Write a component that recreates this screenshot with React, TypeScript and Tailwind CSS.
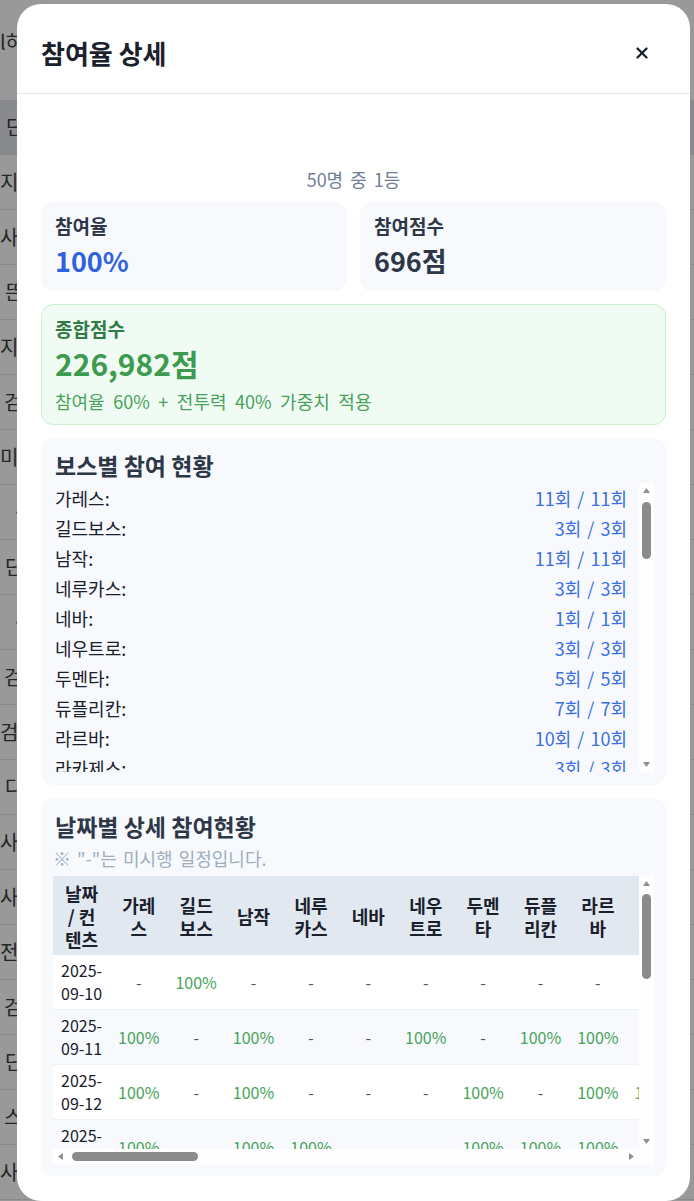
import { X } from "lucide-react";

type BossStat = {
  name: string;
  done: number;
  total: number;
};

const bossStats: BossStat[] = [
  { name: "가레스", done: 11, total: 11 },
  { name: "길드보스", done: 3, total: 3 },
  { name: "남작", done: 11, total: 11 },
  { name: "네루카스", done: 3, total: 3 },
  { name: "네바", done: 1, total: 1 },
  { name: "네우트로", done: 3, total: 3 },
  { name: "두멘타", done: 5, total: 5 },
  { name: "듀플리칸", done: 7, total: 7 },
  { name: "라르바", done: 10, total: 10 },
  { name: "라카제스", done: 3, total: 3 },
  { name: "레비아탄", done: 2, total: 2 },
  { name: "로드마", done: 4, total: 4 },
  { name: "리치", done: 6, total: 6 },
  { name: "마야", done: 2, total: 2 },
  { name: "메두사", done: 8, total: 8 },
  { name: "바포메트", done: 5, total: 5 },
  { name: "발록", done: 1, total: 1 },
  { name: "베리스", done: 3, total: 3 },
  { name: "불칸", done: 4, total: 4 },
  { name: "사이클롭스", done: 6, total: 6 },
  { name: "산적두목", done: 9, total: 9 },
  { name: "세르칸", done: 2, total: 2 },
  { name: "셀로비아", done: 3, total: 3 },
  { name: "수르트", done: 1, total: 1 },
  { name: "스피드", done: 7, total: 7 },
  { name: "시에라", done: 4, total: 4 },
  { name: "아나키스", done: 2, total: 2 },
  { name: "아르보", done: 5, total: 5 },
  { name: "안타라스", done: 1, total: 1 },
  { name: "에이션트", done: 3, total: 3 },
  { name: "오르펜", done: 6, total: 6 },
  { name: "우로보로스", done: 2, total: 2 },
  { name: "이프리트", done: 8, total: 8 },
  { name: "자켄", done: 4, total: 4 },
  { name: "장군", done: 10, total: 10 },
  { name: "케르투브", done: 3, total: 3 },
  { name: "코루스", done: 5, total: 5 },
  { name: "크루마", done: 2, total: 2 },
  { name: "타르칸", done: 6, total: 6 },
  { name: "탈킨", done: 1, total: 1 },
  { name: "티미트리스", done: 4, total: 4 },
  { name: "파푸리온", done: 3, total: 3 },
  { name: "퀸앤트", done: 7, total: 7 },
  { name: "하피", done: 2, total: 2 },
];

// 1 = 100%, 0 = 미시행("-"), null = 빈칸
const visibleDays: { date: string; cells: (number | null)[] }[] = [
  { date: "2025-09-10", cells: [0, 1, 0, 0, 0, 0, 0, 0, 0, null] },
  { date: "2025-09-11", cells: [1, 0, 1, 0, 0, 1, 0, 1, 1, null] },
  { date: "2025-09-12", cells: [1, 0, 1, 0, 0, 0, 1, 0, 1, 1] },
  { date: "2025-09-13", cells: [1, 0, 1, 1, 0, 0, 1, 1, 1, 0] },
];

const moreDates = ["2025-09-14", "2025-09-15", "2025-09-16", "2025-09-17", "2025-09-18", "2025-09-19"];

const days = [
  ...visibleDays,
  ...moreDates.map((date, i) => ({
    date,
    cells: bossStats.map((_, j) => ((i + j) % 3 === 0 ? 1 : 0)),
  })),
];

const bgRows = [
  { text: "단", pad: "pl-[6px]", shade: true },
  { text: "지", pad: "pl-0", shade: false },
  { text: "사", pad: "pl-0", shade: false },
  { text: "뜬", pad: "pl-[5px]", shade: false },
  { text: "지", pad: "pl-0", shade: false },
  { text: "검", pad: "pl-[4px]", shade: false },
  { text: "미", pad: "pl-0", shade: false },
  { text: "·", pad: "pl-[12px]", shade: false },
  { text: "단", pad: "pl-[5px]", shade: false },
  { text: "·", pad: "pl-[12px]", shade: false },
  { text: "검", pad: "pl-[4px]", shade: false },
  { text: "검", pad: "pl-0", shade: false },
  { text: "다", pad: "pl-[5px]", shade: false },
  { text: "사", pad: "pl-0", shade: false },
  { text: "사", pad: "pl-0", shade: false },
  { text: "전", pad: "pl-0", shade: false },
  { text: "검", pad: "pl-[4px]", shade: false },
  { text: "단", pad: "pl-[5px]", shade: false },
  { text: "스", pad: "pl-[4px]", shade: false },
  { text: "사", pad: "pl-0", shade: false },
];

function Arrow({ dir }: { dir: "up" | "down" | "left" | "right" }) {
  const points = {
    up: "3.5,0 7,5 0,5",
    down: "0,0 7,0 3.5,5",
    left: "5,0 5,7 0,3.5",
    right: "0,0 5,3.5 0,7",
  }[dir];
  const vertical = dir === "up" || dir === "down";
  return (
    <svg width={vertical ? 7 : 5} height={vertical ? 5 : 7} viewBox={vertical ? "0 0 7 5" : "0 0 5 7"}>
      <polygon points={points} fill="#8f8f8f" />
    </svg>
  );
}

function VScroll({ thumbClass }: { thumbClass: string }) {
  return (
    <div className="flex w-[15px] shrink-0 flex-col items-center bg-[#fefefe]">
      <div className="flex h-[15px] items-center justify-center">
        <Arrow dir="up" />
      </div>
      <div className="flex flex-1 flex-col items-center">
        <div className={`w-[9px] rounded-full bg-[#8b8b8b] ${thumbClass}`} />
      </div>
      <div className="flex h-[15px] items-center justify-center">
        <Arrow dir="down" />
      </div>
    </div>
  );
}

function HScroll() {
  return (
    <div className="flex h-[15px] items-center bg-[#fefefe]">
      <div className="flex w-[15px] items-center justify-center">
        <Arrow dir="left" />
      </div>
      <div className="flex flex-1 items-center">
        <div className="ml-[4px] h-[9px] w-[126px] rounded-full bg-[#8b8b8b]" />
      </div>
      <div className="flex w-[15px] items-center justify-center">
        <Arrow dir="right" />
      </div>
    </div>
  );
}

function Cell({ value }: { value: number | null | undefined }) {
  if (value === null || value === undefined) return <td className="px-2 py-1" />;
  if (value === 1) return <td className="px-2 py-1 text-[#48a35a]">100%</td>;
  return <td className="px-2 py-1 text-[#4a5568]">-</td>;
}

export default function App() {
  return (
    <div className="relative h-[1201px] w-full overflow-hidden bg-white font-['Noto_Sans_CJK_KR',sans-serif] text-[#1a202c]">
      {/* page behind the overlay */}
      <div className="flex flex-col text-[20px] text-[#3c3c3c]">
        <div className="flex h-[100px] flex-col pt-[28px]">
          <span className="leading-[28px]">l하</span>
        </div>
        {bgRows.map((row, i) => (
          <div
            key={i}
            className={`flex h-[55px] items-center border-b border-gray-200 ${row.pad} ${row.shade ? "bg-gray-200" : ""}`}
          >
            {row.text}
          </div>
        ))}
      </div>

      <div className="absolute inset-0 bg-black/40">
        <div className="ml-[17px] mt-[4px] flex h-[1197px] w-[673px] flex-col overflow-hidden rounded-3xl bg-white">
          <div className="flex shrink-0 items-center justify-between border-b border-[#e2e8f0] px-6 pt-[33px] pb-[24px]">
            <h2 className="text-[26px] font-bold leading-8 text-[#1a202c]">참여율 상세</h2>
            <button className="mr-2 flex h-8 w-8 items-center justify-center text-[#1a202c]">
              <X size={18} strokeWidth={3} />
            </button>
          </div>

          <div className="flex flex-col px-6 pb-6">
            <p className="mt-[73px] text-center text-[18px] leading-6 text-[#718096] [word-spacing:3px]">50명 중 1등</p>

            <div className="mt-[11px] grid grid-cols-2 gap-[13px]">
              <div className="rounded-xl bg-[#f7f9fc] px-[14px] pt-[12px] pb-[12px]">
                <div className="text-[19px] font-bold leading-6 text-[#2d3748]">참여율</div>
                <div className="mt-[5px] text-[27px] font-bold leading-9 text-[#2f62db]">100%</div>
              </div>
              <div className="rounded-xl bg-[#f7f9fc] px-[14px] pt-[12px] pb-[12px]">
                <div className="text-[19px] font-bold leading-6 text-[#2d3748]">참여점수</div>
                <div className="mt-[5px] text-[27px] font-bold leading-9 text-[#2d3748]">696점</div>
              </div>
            </div>

            <div className="mt-[13px] rounded-xl border border-[#c6f0d0] bg-[#f0fbf3] px-[13px] pt-[12px] pb-[10px]">
              <div className="text-[19px] font-bold leading-6 text-[#2f7a45]">종합점수</div>
              <div className="mt-[2px] text-[30px] font-bold leading-10 text-[#3d9b50]">226,982점</div>
              <div className="mt-[5px] text-[18px] leading-[26px] text-[#48a35a] [word-spacing:4.5px]">
                참여율 60% + 전투력 40% 가중치 적용
              </div>
            </div>

            <div className="mt-[13px] rounded-xl bg-[#f7f9fc] pl-[14px] pr-[12px] pt-[12px] pb-[13px]">
              <h3 className="text-[23px] font-bold leading-[30px] text-[#2d3748]">보스별 참여 현황</h3>
              <div className="mt-[3px] flex h-[289px]">
                <div className="flex-1 overflow-hidden pr-3">
                  {bossStats.map((b) => (
                    <div key={b.name} className="flex h-[30px] items-center justify-between text-[18px]">
                      <span className="text-[#1a202c]">{b.name}:</span>
                      <span className="text-[#3b6fe0] [word-spacing:2px]">
                        {b.done}회 / {b.total}회
                      </span>
                    </div>
                  ))}
                </div>
                <VScroll thumbClass="mt-[4px] h-[57px]" />
              </div>
            </div>

            <div className="mt-[13px] rounded-xl bg-[#f7f9fc] px-3 pt-[13px] pb-3">
              <h3 className="pl-[2px] text-[23px] font-bold leading-[30px] text-[#2d3748]">날짜별 상세 참여현황</h3>
              <p className="mt-[5px] text-[18px] leading-6 text-[#a0aec0] [word-spacing:2px]">
                ※ "-"는 미시행 일정입니다.
              </p>
              <div className="mt-[6px] flex h-[288px] flex-col">
                <div className="flex min-h-0 flex-1">
                  <div className="min-w-0 flex-1 overflow-hidden">
                    <table className="border-collapse text-center text-base leading-[23px]">
                      <thead>
                        <tr className="bg-[#e2e8f0] text-[#1a202c]">
                          <th className="px-2 pt-[6px] pb-1 text-[18px] font-bold">날짜 / 컨텐츠</th>
                          {bossStats.map((b) => (
                            <th key={b.name} className="px-2 pt-[6px] pb-1 text-[18px] font-bold">
                              {b.name}
                            </th>
                          ))}
                        </tr>
                      </thead>
                      <tbody>
                        {days.map((d, i) => (
                          <tr
                            key={d.date}
                            className={`border-b border-[#edf2f7] ${i % 2 === 1 ? "bg-[#f7f9fc]" : "bg-white"}`}
                          >
                            <td className="px-2 py-1 text-[#1a202c]">{d.date}</td>
                            {bossStats.map((b, j) => (
                              <Cell key={b.name} value={d.cells[j]} />
                            ))}
                          </tr>
                        ))}
                      </tbody>
                    </table>
                  </div>
                  <VScroll thumbClass="mt-[3px] h-[85px]" />
                </div>
                <div className="flex">
                  <div className="flex-1">
                    <HScroll />
                  </div>
                  <div className="h-[15px] w-[15px] bg-[#fefefe]" />
                </div>
              </div>
            </div>
          </div>
        </div>
      </div>
    </div>
  );
}
